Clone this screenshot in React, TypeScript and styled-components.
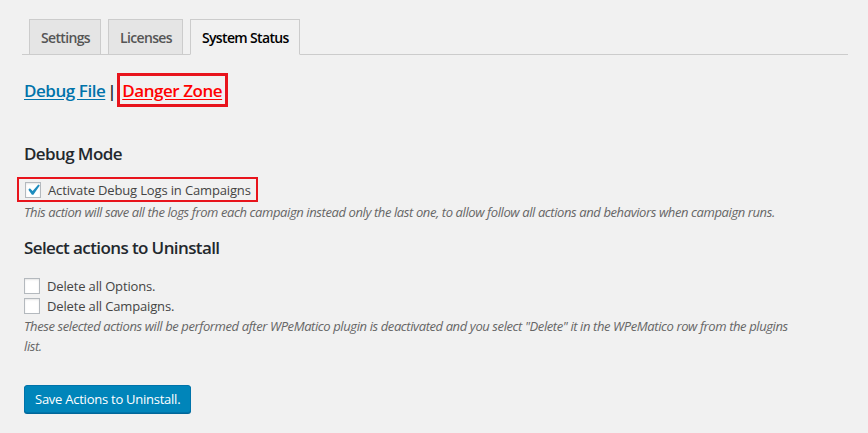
import React from "react";
import styled, { createGlobalStyle } from "styled-components";

const Global = createGlobalStyle`
  html, body { margin: 0; padding: 0; background: #f1f1f1; }
  body { font-family: "Open Sans", "Noto Sans", sans-serif; color: #444; font-size: 13px; }
  * { box-sizing: border-box; }
`;

const Wrap = styled.div`
  padding: 19px 20px 0 22px;
  width: 868px;
  height: 433px;
`;

const TabBar = styled.nav`
  display: flex;
  align-items: flex-end;
  gap: 7px;
  padding-left: 7px;
  border-bottom: 1px solid #ccc;
  height: 36px;
`;

const Tab = styled.a<{ $active?: boolean }>`
  display: flex;
  align-items: center;
  height: ${(p) => (p.$active ? "36px" : "35px")};
  margin-bottom: ${(p) => (p.$active ? "-1px" : "0")};
  padding: 0 10px 0 11px;
  border: 1px solid #ccc;
  border-bottom: ${(p) => (p.$active ? "1px solid #f1f1f1" : "none")};
  background: ${(p) => (p.$active ? "#f1f1f1" : "#e5e5e5")};
  color: ${(p) => (p.$active ? "#000" : "#555")};
  font-size: 14px;
  font-weight: 600;
  text-decoration: none;
  letter-spacing: -0.65px;
`;

const LinkRow = styled.div`
  display: flex;
  align-items: center;
  margin-top: 18px;
  padding-left: 2px;
  height: 34px;
  font-size: 17px;
  font-weight: 600;
  letter-spacing: -0.45px;
`;

const SubLink = styled.a<{ $danger?: boolean }>`
  color: ${(p) => (p.$danger ? "#f00" : "#0073aa")};
  text-decoration: underline;
  text-underline-offset: 2px;
`;

const Sep = styled.span`
  color: #23282d;
  margin: 0 1px 0 2px;
  font-weight: 600;
`;

const Highlight = styled.span`
  display: flex;
  align-items: center;
  height: 34px;
  padding: 0 3px 0 2px;
  border: 3px solid #e8141c;
`;

const Heading = styled.h2<{ $top: number }>`
  margin: ${(p) => p.$top}px 0 0 2px;
  font-size: 17px;
  font-weight: 600;
  color: #23282d;
  line-height: 24px;
  letter-spacing: -0.6px;
`;

const CheckRow = styled.label<{ $boxed?: boolean }>`
  display: flex;
  align-items: center;
  gap: 7px;
  width: ${(p) => (p.$boxed ? "241px" : "auto")};
  height: ${(p) => (p.$boxed ? "25px" : "20px")};
  padding-left: ${(p) => (p.$boxed ? "6px" : "2px")};
  margin-left: ${(p) => (p.$boxed ? "-5px" : "0")};
  border: ${(p) => (p.$boxed ? "2px solid #e8141c" : "none")};
  color: #444;
  font-size: 13px;
  letter-spacing: -0.15px;
`;

const Box = styled.span`
  flex: none;
  width: 16px;
  height: 16px;
  border: 1px solid #b4b9be;
  background: #fff;
  box-shadow: inset 0 1px 2px rgba(0, 0, 0, 0.1);
  display: flex;
  align-items: center;
  justify-content: center;
  overflow: visible;
`;

const Desc = styled.p`
  margin: 0;
  padding-left: 2px;
  max-width: 778px;
  font-size: 13px;
  line-height: 20px;
  font-style: italic;
  color: #666;
  letter-spacing: -0.4px;
`;

const Group = styled.div<{ $top: number }>`
  margin-top: ${(p) => p.$top}px;
`;

const Button = styled.button`
  margin: 29px 0 0 2px;
  height: 28px;
  padding: 0 10px;
  background: #0085ba;
  border: 1px solid #0073aa;
  border-radius: 3px;
  box-shadow: 0 1px 0 #006799;
  color: #fff;
  font-family: inherit;
  font-size: 13px;
  letter-spacing: -0.25px;
  cursor: pointer;
`;

const Check = () => (
  <svg width="22" height="22" viewBox="0 0 20 20" style={{ flex: "none", margin: "-3px" }}>
    <path d="M14.83 4.89l1.34.94-5.81 8.38H9.02L5.78 9.67l1.34-1.25 2.57 2.4z" fill="#1e8cbe" />
  </svg>
);

export default function App() {
  return (
    <>
      <Global />
      <Wrap>
        <TabBar>
          <Tab href="#">Settings</Tab>
          <Tab href="#">Licenses</Tab>
          <Tab href="#" $active>System Status</Tab>
        </TabBar>

        <LinkRow>
          <SubLink href="#">Debug File</SubLink>
          <Sep>|</Sep>
          <Highlight>
            <SubLink href="#" $danger>Danger Zone</SubLink>
          </Highlight>
        </LinkRow>

        <Heading $top={35}>Debug Mode</Heading>
        <Group $top={11}>
          <CheckRow $boxed>
            <Box>
              <Check />
            </Box>
            Activate Debug Logs in Campaigns
          </CheckRow>
          <Desc>
            This action will save all the logs from each campaign instead only the last one, to allow follow all actions and behaviors when campaign runs.
          </Desc>
        </Group>

        <Heading $top={14}>Select actions to Uninstall</Heading>
        <Group $top={16}>
          <CheckRow>
            <Box />
            Delete all Options.
          </CheckRow>
          <CheckRow>
            <Box />
            Delete all Campaigns.
          </CheckRow>
          <Desc>
            These selected actions will be performed after WPeMatico plugin is deactivated and you select "Delete" it in the WPeMatico row from the plugins list.
          </Desc>
        </Group>

        <Button>Save Actions to Uninstall.</Button>
      </Wrap>
    </>
  );
}
